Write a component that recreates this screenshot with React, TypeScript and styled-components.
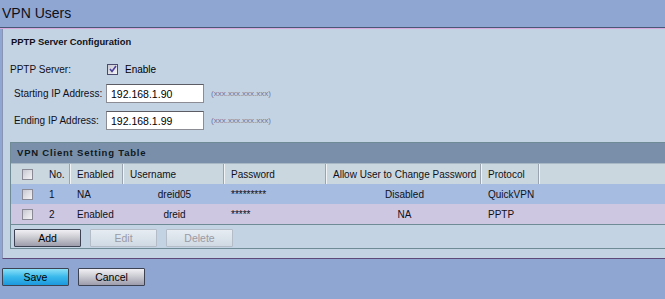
import React from 'react';
import styled, { createGlobalStyle } from 'styled-components';

const GlobalStyle = createGlobalStyle`
	html, body {
		margin: 0;
		padding: 0;
		background: #8fa6d2;
		font-family: 'Liberation Sans', Arial, sans-serif;
		font-size: 10px;
		color: #000;
	}
`;

type TClient = {
	no: number;
	enabled: string;
	username: string;
	password: string;
	allowChange: string;
	protocol: string;
};

const clients: TClient[] = [
	{ no: 1, enabled: 'NA', username: 'dreid05', password: '*********', allowChange: 'Disabled', protocol: 'QuickVPN' },
	{ no: 2, enabled: 'Enabled', username: 'dreid', password: '*****', allowChange: 'NA', protocol: 'PPTP' },
];

const columns = '32px 28px 53px 101px 102px 155px 58px 1fr';

const App = () => {
	return (
		<>
			<GlobalStyle />
			<Page>
				<Header>
					<Title>VPN Users</Title>
				</Header>
				<Panel>
					<SectionTitle>PPTP Server Configuration</SectionTitle>
					<ServerRow>
						<Label width={97}>PPTP Server:</Label>
						<Check checked />
						<CheckText>Enable</CheckText>
					</ServerRow>
					<FieldRow>
						<Label width={92}>Starting IP Address:</Label>
						<Input defaultValue='192.168.1.90' />
						<Hint>(xxx.xxx.xxx.xxx)</Hint>
					</FieldRow>
					<FieldRow>
						<Label width={92}>Ending IP Address:</Label>
						<Input defaultValue='192.168.1.99' />
						<Hint>(xxx.xxx.xxx.xxx)</Hint>
					</FieldRow>
					<TableBox>
						<TableTitle>VPN Client Setting Table</TableTitle>
						<HeadRow>
							<CheckCell>
								<Check />
							</CheckCell>
							<HeadCell>No.</HeadCell>
							<HeadCell>Enabled</HeadCell>
							<HeadCell>Username</HeadCell>
							<HeadCell>Password</HeadCell>
							<HeadCell>Allow User to Change Password</HeadCell>
							<HeadCell>Protocol</HeadCell>
							<HeadCell />
						</HeadRow>
						{clients.map((c, i) => (
							<BodyRow key={c.no} odd={i % 2 === 0}>
								<CheckCell>
									<Check />
								</CheckCell>
								<Cell>{c.no}</Cell>
								<Cell>{c.enabled}</Cell>
								<Cell center>{c.username}</Cell>
								<Cell>{c.password}</Cell>
								<Cell center>{c.allowChange}</Cell>
								<Cell>{c.protocol}</Cell>
								<Cell />
							</BodyRow>
						))}
						<ButtonBar>
							<Button>Add</Button>
							<Button disabled>Edit</Button>
							<Button disabled>Delete</Button>
						</ButtonBar>
					</TableBox>
				</Panel>
				<Footer>
					<Button primary>Save</Button>
					<Button>Cancel</Button>
				</Footer>
			</Page>
		</>
	);
};

const Check = ({ checked }: { checked?: boolean }) => (
	<CheckBox checked={checked}>
		{checked && (
			<svg width='8' height='8' viewBox='0 0 8 8'>
				<path d='M1 4 L3 6.5 L7 1' stroke='#4a3f9a' strokeWidth='1.6' fill='none' />
			</svg>
		)}
	</CheckBox>
);

const Page = styled.div`
	width: 665px;
	height: 299px;
	overflow: hidden;
`;

const Header = styled.div`
	height: 27px;
	border-bottom: 1px solid #4a5878;
	box-shadow: 0 1px 0 #d8a8dc;
	display: flex;
	align-items: center;
`;

const Title = styled.h1`
	margin: 0 0 2px 2px;
	font-size: 14px;
	font-weight: normal;
	color: #101018;
`;

const Panel = styled.div`
	margin: 1px 0 0 2px;
	height: 230px;
	box-sizing: border-box;
	background: #c3d3e4;
	border-left: 1px solid #8894b4;
	border-bottom: 1px solid #5e4a7a;
	padding-top: 6px;
	display: flex;
	flex-direction: column;
`;

const SectionTitle = styled.div`
	font-weight: bold;
	font-size: 9.4px;
	padding-left: 8px;
	height: 14px;
	line-height: 14px;
	color: #101018;
`;

const ServerRow = styled.div`
	display: flex;
	align-items: center;
	margin-top: 13px;
	padding-left: 7px;
	height: 14px;
`;

const Label = styled.span<{ width: number }>`
	width: ${p => p.width}px;
	flex: none;
	white-space: nowrap;
	color: #101018;
`;

const CheckText = styled.span`
	margin-left: 7px;
`;

const CheckBox = styled.span<{ checked?: boolean }>`
	width: 9px;
	height: 9px;
	flex: none;
	display: inline-flex;
	align-items: center;
	justify-content: center;
	border: 1px solid ${p => (p.checked ? '#4a4a70' : '#8a8a96')};
	background: linear-gradient(135deg, #c8c8d2, #f4f4f6);
`;

const FieldRow = styled.div`
	display: flex;
	align-items: center;
	padding-left: 11px;
	margin-top: 8px;
	height: 19px;
`;

const Input = styled.input`
	width: 98px;
	height: 19px;
	box-sizing: border-box;
	border: 1px solid #8c8c94;
	border-top-color: #5c5c64;
	padding: 0 0 0 4px;
	font-family: inherit;
	font-size: 10.5px;
	color: #000;
	background: #fff;
	outline: none;
`;

const Hint = styled.span`
	margin-left: 7px;
	font-size: 8px;
	color: #76769a;
`;

const TableBox = styled.div`
	margin: 12px 0 0 7px;
	border: 1px solid #6f8c96;
	border-right: none;
	height: 107px;
	box-sizing: border-box;
	display: flex;
	flex-direction: column;
`;

const TableTitle = styled.div`
	height: 20px;
	line-height: 20px;
	background: #7a90aa;
	font-weight: bold;
	font-size: 9.5px;
	letter-spacing: 0.8px;
	padding-left: 6px;
	color: #101820;
	border-bottom: 1px solid #a8b8c4;
`;

const GridRow = styled.div`
	display: grid;
	grid-template-columns: ${columns};
	height: 20px;
`;

const HeadRow = styled(GridRow)`
	background: #cbd7df;
`;

const BodyRow = styled(GridRow)<{ odd: boolean }>`
	background: ${p => (p.odd ? '#a6bce0' : '#cdc7e2')};
`;

const HeadCell = styled.div`
	display: flex;
	align-items: center;
	padding-left: 6px;
	border-right: 1px solid #f0f4f6;
	box-shadow: inset -1px 0 0 #9aa4b0;
	white-space: nowrap;
	overflow: hidden;
	color: #101018;

	&:last-child {
		border-right: none;
		box-shadow: none;
	}
`;

const CheckCell = styled.div`
	display: flex;
	align-items: center;
	padding-left: 11px;
	border-right: 1px solid transparent;
`;

const Cell = styled.div<{ center?: boolean }>`
	display: flex;
	align-items: center;
	justify-content: ${p => (p.center ? 'center' : 'flex-start')};
	padding-left: ${p => (p.center ? 0 : 6)}px;
	white-space: nowrap;
	color: #101018;
`;

const ButtonBar = styled.div`
	display: flex;
	gap: 9px;
	padding: 4px 0 0 3px;
	border-top: 1px solid #6f8c96;
	flex: 1;
`;

const Button = styled.button<{ primary?: boolean }>`
	width: 67px;
	height: 18px;
	padding: 0;
	font-family: inherit;
	font-size: 10.5px;
	color: #000;
	border: 1px solid #3c4252;
	border-radius: 1px;
	background: ${p =>
		p.primary
			? 'linear-gradient(#8ae0f8, #38b8ec 50%, #1c98dc)'
			: 'linear-gradient(#f0f0f4, #c8c8d0 50%, #9c9cac)'};

	&:disabled {
		color: #9a9aa4;
		border-color: #b4bcc8;
		background: linear-gradient(#e6ecf2, #d0dae4);
	}
`;

const Footer = styled.div`
	display: flex;
	gap: 9px;
	padding: 9px 0 0 2px;
`;

export default App;
